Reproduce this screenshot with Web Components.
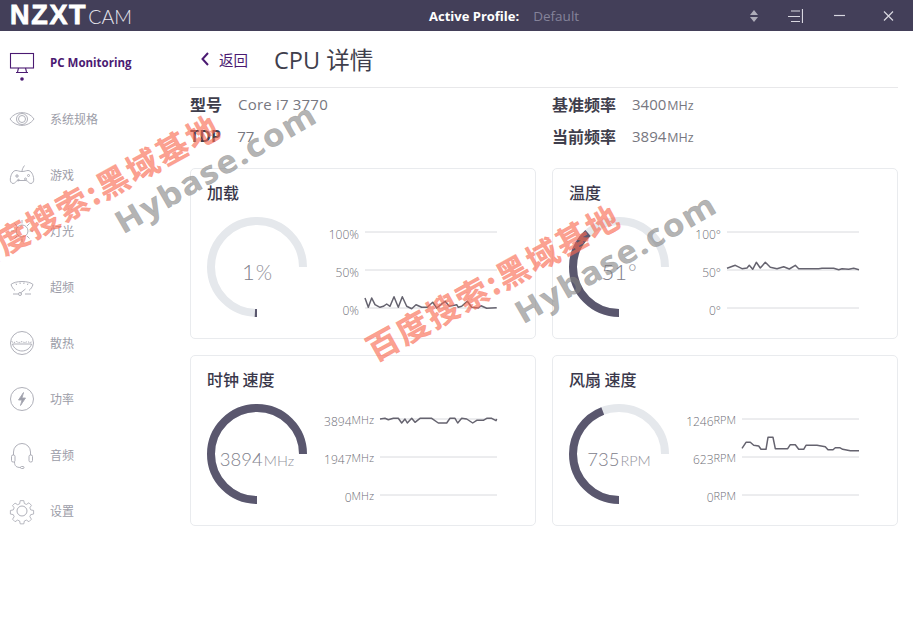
<!DOCTYPE html>
<html lang="zh">
<head>
<meta charset="utf-8">
<title>NZXT CAM</title>
<style>
html, body { margin: 0; height: 100%; background: #fff; }
body { position: relative; overflow: hidden; font-family: "Open Sans", "Noto Sans CJK SC", sans-serif; }
.layout { display: flex; }
.stats { display: grid; grid-template-columns: 346px 346px; gap: 16px; }
</style>
</head>
<body>
<nz-titlebar></nz-titlebar>
<div class="layout">
  <nz-sidenav>
    <nz-navitem active icon="monitor">PC Monitoring</nz-navitem>
    <nz-navitem icon="eye">系统规格</nz-navitem>
    <nz-navitem icon="gamepad">游戏</nz-navitem>
    <nz-navitem icon="light">灯光</nz-navitem>
    <nz-navitem icon="speedo">超频</nz-navitem>
    <nz-navitem icon="cooling">散热</nz-navitem>
    <nz-navitem icon="power">功率</nz-navitem>
    <nz-navitem icon="headset">音频</nz-navitem>
    <nz-navitem icon="gear">设置</nz-navitem>
  </nz-sidenav>
  <nz-detail>
    <div class="stats">
      <nz-statcard title="加载" percent="1" value="1" unit="%" big
        labels="100,50,0" label-unit="%" line="132" origin="525 202"
        trace="525,400 535,428 545,400 555,420 570,428 580,425 590,418 600,425 612,396 625,428 637,396 650,425 665,432 678,420 695,428 712,428 728,413 740,430 765,410 778,425 800,420 805,428 815,425 832,410 845,428 865,430 873,423 890,431 920,429"></nz-statcard>
      <nz-statcard title="温度" percent="51" value="51" unit="°" big
        labels="100,50,0" label-unit="°" line="132" origin="530 202"
        trace="530,311 555,302 575,312 590,310 597,302 607,314 618,293 630,310 645,293 660,308 680,312 700,306 717,313 735,302 745,312 805,312 815,311 850,311 865,315 875,312 895,314 910,311 926,315"></nz-statcard>
      <nz-statcard title="时钟 速度" percent="100" value="3894" unit="MHz"
        labels="3894,1947,0" label-unit="MHz" line="117" origin="570 210"
        trace="570,210 585,208 595,212 610,208 625,208 635,222 645,210 652,222 665,208 675,220 690,208 725,208 745,222 770,222 780,208 795,208 803,222 815,208 830,210 848,222 860,214 880,214 890,208 905,208 918,215 920,210"></nz-statcard>
      <nz-statcard title="风扇 速度" percent="59" value="735" unit="RPM"
        labels="1246,623,0" label-unit="RPM" line="117" origin="575 208"
        trace="575,296 587,278 600,278 610,287 625,289 632,299 647,299 653,263 668,263 675,297 712,297 720,285 735,285 745,299 760,299 767,287 800,287 825,291 833,300 848,300 855,294 868,294 877,299 900,303 926,303"></nz-statcard>
    </div>
  </nz-detail>
</div>
<nz-watermark x="-32" y="242"></nz-watermark>
<nz-watermark x="368" y="332"></nz-watermark>

<script>
const ICONS = {
  monitor: '<rect x=".5" y="4.500" width="23" height="14.500"/><path d="M8.500 19l-1 4M15.500 19l1 4M6 23.500h12"/><circle cx="12" cy="30" r="1.800" fill="currentColor" stroke="none"/>',
  eye: '<path d="M0 14C6 5.500 18 5.500 24 14 18 22.500 6 22.500 0 14z"/><circle cx="12" cy="14" r="5.500"/><circle cx="12" cy="14" r="3.500"/>',
  gamepad: '<path d="M6 9.500c2 0 3 1 6 1s4-1 6-1c3 0 5.300 4 5.700 8.500.2 2.500-1 4.500-2.800 4.500-2.200 0-3-3-5-3H8.100c-2 0-2.800 3-5 3-1.800 0-3-2-2.800-4.500C.700 13.500 3 9.500 6 9.500z"/><path d="M12 10.500c0-2 1-4 2.500-6M5 15h4M7 13v4"/><circle cx="15.500" cy="18" r="1"/><circle cx="18.500" cy="14.500" r="1"/><circle cx="8.500" cy="19" r=".8"/>',
  light: '<circle cx="12" cy="14" r="6"/><path d="M12 3v3.500M12 21.500V25M1 14h3.500M19.500 14H23M4.500 6.500l2.500 2.500M17 19l2.500 2.500M19.500 6.500L17 9M7 19l-2.500 2.500"/>',
  speedo: '<path d="M1 11.500c4-4 18-4 22 0-.8 2.500-2.200 4.500-4 6M1 11.500c.8 2.500 2.200 4.500 4 6"/><path d="M6 10.500l.6 1.500M10 9.500l.2 1.500M14 9.500l-.2 1.500M18 10.500l-.6 1.500M3 21h5M15 21h6M10.500 20l5-4"/><circle cx="10" cy="21" r="1.500"/>',
  cooling: '<circle cx="12" cy="14" r="11.500"/><path d="M1.500 12.500c2 1.300 3 1.300 5 0 2 1.300 3 1.300 5.500 0 2 1.300 3 1.300 5.500 0 2 1.300 3 1.300 5 0" stroke-dasharray="1.500 1"/><path d="M2.500 15h19c-1 4-5 7-9.500 7s-8.500-3-9.500-7z"/>',
  power: '<circle cx="12" cy="14" r="11.500"/><path d="M13.500 7.500L8.500 15h3.500l-1.500 5.500 5-7.500H12z" fill="currentColor"/>',
  headset: '<path d="M3.500 14V11a8.500 8.500 0 0 1 17 0v3"/><rect x="1.500" y="14" width="3.500" height="7" rx="1.500"/><rect x="19" y="14" width="3.500" height="7" rx="1.500"/><path d="M4.500 21c0 4 2 5.500 6 5.500"/><rect x="10.500" y="25.500" width="3.500" height="2" rx="1"/>',
  gear: '<circle cx="12" cy="14" r="5"/><path d="M10 2.500h4l.6 3.200 2.300 1 2.800-1.800 2.800 2.800-1.800 2.800 1 2.300 3.200.6v4l-3.200.6-1 2.300 1.800 2.800-2.800 2.800-2.800-1.800-2.300 1-.6 3.200h-4l-.6-3.200-2.300-1-2.800 1.800-2.800-2.800 1.800-2.800-1-2.300-3.200-.6v-4l3.200-.6 1-2.300L1.500 8 4.300 5.200l2.800 1.800 2.300-1z" transform="translate(1.200 1.400) scale(.9)"/>'
};

class NzTitlebar extends HTMLElement {
  constructor() {
    super();
    this.attachShadow({mode: 'open'}).innerHTML = `
<style>
:host { display: flex; align-items: center; height: 31px; background: #433f59; color: #fff; }
.logo { width: 429px; padding-left: 10px; box-sizing: border-box; display: flex; align-items: baseline; }
.nzxt { font: 700 27px/31px "Liberation Sans", sans-serif; letter-spacing: 1.700px; -webkit-text-stroke: .8px #fff; }
.cam { font: 300 19.500px/31px Lato, sans-serif; margin-left: 1px; color: #e8e7ee; }
.name { font: 700 13px "Open Sans", sans-serif; }
.value { font: 400 13.500px "Open Sans", sans-serif; color: #85839a; margin-left: 14px; }
.btns { margin-left: auto; display: flex; align-items: center; }
svg { display: block; fill: none; stroke: #d8d7e0; stroke-width: 1.2; }
.sw { width: 41px; display: flex; justify-content: center; }
.sw.w { width: 49px; }
</style>
<div class="logo"><span class="nzxt">NZXT</span><span class="cam">CAM</span></div>
<span class="name">Active Profile:</span><span class="value">Default</span>
<div class="btns">
  <div class="sw"><svg width="10" height="14" viewBox="0 0 10 14"><path d="M5 1l4 5H1zM5 13l4-5H1z" fill="#aeadb9" stroke="none"/></svg></div>
  <div class="sw"><svg width="16" height="14" viewBox="0 0 16 14"><path d="M4 2h9M1 7.500h12M4 12.500h9M15.500 0v14"/></svg></div>
  <div class="sw w"><svg width="11" height="3" viewBox="0 0 11 3"><path d="M0 1.500h11"/></svg></div>
  <div class="sw w"><svg width="11" height="10" viewBox="0 0 11 10"><path d="M1 .5l9 9M10 .5l-9 9"/></svg></div>
</div>`;
  }
}

class NzSidenav extends HTMLElement {
  constructor() {
    super();
    this.attachShadow({mode: 'open'}).innerHTML = `
<style>:host { display: block; width: 190px; flex: none; padding-top: 4px; }</style><slot></slot>`;
  }
}

class NzNavitem extends HTMLElement {
  connectedCallback() {
    const icon = ICONS[this.getAttribute('icon')] || '';
    this.attachShadow({mode: 'open'}).innerHTML = `
<style>
:host { display: flex; align-items: center; height: 56px; padding-left: 10px; color: #9c9da8; font: 400 12px "Noto Sans CJK SC", sans-serif; }
:host([active]) { color: #4b1a72; font: 700 11.500px "Open Sans", sans-serif; }
span { padding-bottom: 2px; }
svg { width: 24px; height: 28px; overflow: visible; fill: none; stroke: #a6a7b1; stroke-width: .9; margin-right: 16px; flex: none; }
:host([active]) svg { stroke: currentColor; stroke-width: 1.1; }
</style>
<svg viewBox="0 0 24 28">${icon}</svg><span><slot></slot></span>`;
  }
}

class NzDetail extends HTMLElement {
  constructor() {
    super();
    this.attachShadow({mode: 'open'}).innerHTML = `
<style>
:host { display: block; width: 708px; color: #777780; font-family: "Open Sans", "Noto Sans CJK SC", sans-serif; }
header { display: flex; align-items: center; height: 56px; border-bottom: 1px solid #e8e8ea; }
.back { display: flex; align-items: center; color: #4b1a72; font: 400 14.500px "Noto Sans CJK SC", sans-serif; margin-left: 11px; width: 73px; }
.back svg { margin-right: 10px; }
h1 { margin: 0; font: 400 23.500px "Open Sans", "Noto Sans CJK SC", sans-serif; color: #3f3e4c; }
.info { display: grid; grid-template-columns: 362px 346px; grid-auto-rows: 32px; padding-bottom: 16px; }
.row { display: flex; align-items: center; gap: 16px; font-size: 15px; }
.model { letter-spacing: .2px; }
b { font: 700 16px "Open Sans", "Noto Sans CJK SC", sans-serif; color: #3f3e4c; }
small { font-size: 12.500px; margin-left: 1px; }
</style>
<header>
  <div class="back"><svg width="8" height="14" viewBox="0 0 8 14" fill="none" stroke="currentColor" stroke-width="2"><path d="M7 1L1.500 7 7 13"/></svg>返回</div>
  <h1>CPU 详情</h1>
</header>
<div class="info">
  <div class="row"><b>型号</b><span class="model">Core i7 3770</span></div>
  <div class="row"><b>基准频率</b><span>3400<small>MHz</small></span></div>
  <div class="row"><b>TDP</b><span>77</span></div>
  <div class="row"><b>当前频率</b><span>3894<small>MHz</small></span></div>
</div>
<slot></slot>`;
  }
}

class NzGauge extends HTMLElement {
  connectedCallback() {
    const pct = +this.getAttribute('percent');
    const big = this.hasAttribute('big');
    this.attachShadow({mode: 'open'}).innerHTML = `
<style>
:host { display: grid; width: 100px; height: 100px; flex: none; }
svg, .val { grid-area: 1 / 1; }
svg { display: block; }
circle { fill: none; stroke-width: 8; }
.val { display: flex; align-items: baseline; justify-content: center; padding-top: 40px; font: 300 ${big ? 22 : 18.500}px/30px Lato, sans-serif; color: #80808a; white-space: nowrap; }
small { font-size: ${big ? 21 : 14.500}px; margin-left: 1px; color: #93939c; }
</style>
<svg viewBox="0 0 100 100" width="100" height="100">
  <g transform="rotate(90 50 50)">
  <circle cx="50" cy="50" r="46" pathLength="360" stroke="#e5e8ec" stroke-dasharray="270 90"/>
  <circle cx="50" cy="50" r="46" pathLength="360" stroke="#5a576e" stroke-dasharray="${pct * 2.7} 360"/>
  </g>
</svg>
<div class="val"><span>${this.getAttribute('value')}</span><small>${this.getAttribute('unit')}</small></div>`;
  }
}

class NzChart extends HTMLElement {
  connectedCallback() {
    const w = +this.getAttribute('line');
    const labels = this.getAttribute('labels').split(',');
    const unit = this.getAttribute('label-unit');
    const [ox, oy] = this.getAttribute('origin').split(' ').map(Number);
    // trace points were read off a 3x crop, so scale them down to the chart
    const pts = this.getAttribute('trace').split(' ').map(function(p) {
      const xy = p.split(',');
      return ((xy[0] - ox) / 3).toFixed(1) + ',' + ((xy[1] - oy) / 3 + 1).toFixed(1);
    }).join(' ');
    const small = unit.length > 1;
    this.attachShadow({mode: 'open'}).innerHTML = `
<style>
:host { display: flex; align-items: flex-start; gap: 6px; margin: -1px 22px 0 auto; }
.labels { font: 300 12px/38px "Open Sans", sans-serif; color: #6f6f78; text-align: right; white-space: nowrap; }
.labels div { height: 38px; }
small { font-size: 11px; position: relative; top: -2px; }
svg { display: block; margin-top: 15px; overflow: visible; }
line { stroke: #d9dade; stroke-width: 1; }
polyline { fill: none; stroke: #65636f; stroke-width: 1.5; stroke-linejoin: round; }
</style>
<div class="labels">${labels.map(l => `<div>${l}${small ? `<small>${unit}</small>` : unit}</div>`).join('')}</div>
<svg width="${w}" height="78" viewBox="0 0 ${w} 78">
  <line x1="0" x2="${w}" y1="1" y2="1"/><line x1="0" x2="${w}" y1="39" y2="39"/><line x1="0" x2="${w}" y1="77" y2="77"/>
  <polyline points="${pts}"/>
</svg>`;
  }
}

class NzStatcard extends HTMLElement {
  connectedCallback() {
    const a = n => this.getAttribute(n);
    this.attachShadow({mode: 'open'}).innerHTML = `
<style>
:host { display: block; height: 171px; box-sizing: border-box; border: 1px solid #e9ebee; border-radius: 5px; padding: 11px 16px 0; }
h2 { margin: 0 0 13px; font: 500 16px/24px "Noto Sans CJK SC", sans-serif; color: #3a384b; }
.body { display: flex; }
</style>
<h2>${a('title')}</h2>
<div class="body">
  <nz-gauge percent="${a('percent')}" value="${a('value')}" unit="${a('unit')}" ${this.hasAttribute('big') ? 'big' : ''}></nz-gauge>
  <nz-chart labels="${a('labels')}" label-unit="${a('label-unit')}" line="${a('line')}" origin="${a('origin')}" trace="${a('trace')}"></nz-chart>
</div>`;
  }
}

class NzWatermark extends HTMLElement {
  connectedCallback() {
    this.attachShadow({mode: 'open'}).innerHTML = `
<style>
:host { position: absolute; left: ${this.getAttribute('x')}px; top: ${this.getAttribute('y')}px; pointer-events: none; }
div { position: absolute; white-space: nowrap; transform-origin: 0 50%; }
.cn { left: 0; top: 0; font: 700 32px/36px "Noto Sans CJK SC", sans-serif; color: rgba(250, 105, 80, .64); letter-spacing: 2px; -webkit-text-stroke: .5px rgba(250, 105, 80, .4); transform: rotate(-29deg); }
.en { left: 149px; top: -36px; font: 700 31px/36px "Open Sans", sans-serif; color: rgba(130, 130, 130, .62); letter-spacing: 1.500px; -webkit-text-stroke: .5px rgba(130, 130, 130, .4); transform: rotate(-30deg) scaleX(1.12); }
</style>
<div class="cn">百度搜索:黑域基地</div>
<div class="en">Hybase.com</div>`;
  }
}

customElements.define('nz-titlebar', NzTitlebar);
customElements.define('nz-sidenav', NzSidenav);
customElements.define('nz-navitem', NzNavitem);
customElements.define('nz-detail', NzDetail);
customElements.define('nz-gauge', NzGauge);
customElements.define('nz-chart', NzChart);
customElements.define('nz-statcard', NzStatcard);
customElements.define('nz-watermark', NzWatermark);
</script>
</body>
</html>
